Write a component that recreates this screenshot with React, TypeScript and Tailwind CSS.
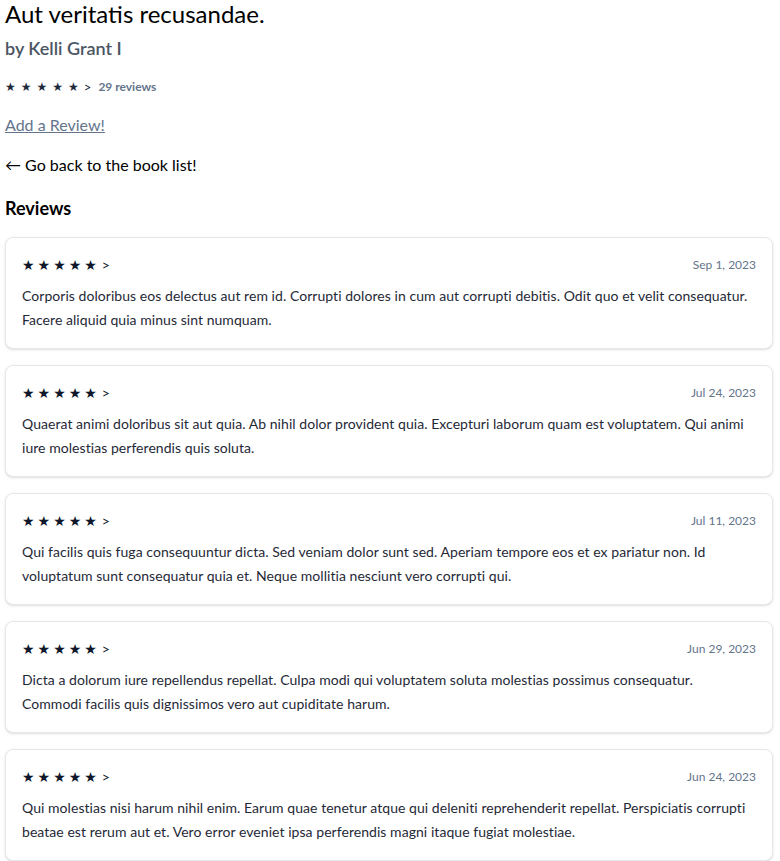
import React from "react";

const reviews: { date: string; lines: string[] }[] = [
  {
    date: "Sep 1, 2023",
    lines: [
      "Corporis doloribus eos delectus aut rem id. Corrupti dolores in cum aut corrupti debitis. Odit quo et velit consequatur. Facere aliquid quia minus sint numquam.",
    ],
  },
  {
    date: "Jul 24, 2023",
    lines: [
      "Quaerat animi doloribus sit aut quia. Ab nihil dolor provident quia. Excepturi laborum quam est voluptatem. Qui animi iure molestias perferendis quis soluta.",
    ],
  },
  {
    date: "Jul 11, 2023",
    lines: [
      "Qui facilis quis fuga consequuntur dicta. Sed veniam dolor sunt sed. Aperiam tempore eos et ex pariatur non. Id voluptatum sunt consequatur quia et. Neque mollitia nesciunt vero corrupti qui.",
    ],
  },
  {
    date: "Jun 29, 2023",
    lines: [
      "Dicta a dolorum iure repellendus repellat. Culpa modi qui voluptatem soluta molestias possimus consequatur.",
      "Commodi facilis quis dignissimos vero aut cupiditate harum.",
    ],
  },
  {
    date: "Jun 24, 2023",
    lines: [
      "Qui molestias nisi harum nihil enim. Earum quae tenetur atque qui deleniti reprehenderit repellat. Perspiciatis corrupti beatae est rerum aut et. Vero error eveniet ipsa perferendis magni itaque fugiat molestiae.",
    ],
  },
];

const starFont = { fontFamily: '"DejaVu Sans", sans-serif' };

export default function App() {
  return (
    <div
      className="bg-white text-black pl-[5px] w-[773px]"
      style={{ fontFamily: 'Lato, "Open Sans", sans-serif' }}
    >
      <h1 className="text-2xl leading-[28px] font-normal">Aut veritatis recusandae.</h1>
      <h2 className="mt-[6px] text-lg leading-7 font-semibold text-[#4b5563]">by Kelli Grant I</h2>
      <div className="mt-[17px] flex items-center text-xs leading-4">
        <span className="inline-flex items-center text-[#1e293b]">
          <span className="inline-flex items-center gap-[5px]" style={starFont}>
            <span className="text-[12px]">★</span>
            <span className="text-[12px]">★</span>
            <span className="text-[12px]">★</span>
            <span className="text-[12px]">★</span>
            <span className="text-[12px]">★</span>
          </span>
          <span className="ml-[5px] text-[13px]">&gt;</span>
        </span>
        <span className="ml-[7px] font-bold text-[#64748b]">29 reviews</span>
      </div>
      <div className="mt-[18px] text-base leading-6">
        <a href="#" className="text-[#64748b] underline">Add a Review!</a>
      </div>
      <div className="mt-[16px] text-base leading-6">
        <a href="#">← Go back to the book list!</a>
      </div>
      <h3 className="mt-[17px] text-lg leading-7 font-bold">Reviews</h3>
      <div className="mt-[15px] flex flex-col gap-4">
        {reviews.map((r) => (
          <div key={r.date} className="rounded-lg border border-gray-200 bg-white p-4 shadow-sm">
            <div className="flex h-[22px] items-center justify-between">
              <span className="inline-flex items-center text-[#0f172a]">
                <span className="inline-flex items-center gap-[3px]" style={starFont}>
                  <span className="text-[14px]">★</span>
                  <span className="text-[14px]">★</span>
                  <span className="text-[14px]">★</span>
                  <span className="text-[14px]">★</span>
                  <span className="text-[14px]">★</span>
                </span>
                <span className="ml-[5px] text-sm">&gt;</span>
              </span>
              <span className="text-xs text-[#64748b]">{r.date}</span>
            </div>
            <p className="mt-2 text-sm leading-6 tracking-[0.05px] text-[#1f2937]">
              {r.lines.map((l, i) => (
                <React.Fragment key={i}>
                  {i > 0 && <br />}
                  {l}
                </React.Fragment>
              ))}
            </p>
          </div>
        ))}
      </div>
    </div>
  );
}
